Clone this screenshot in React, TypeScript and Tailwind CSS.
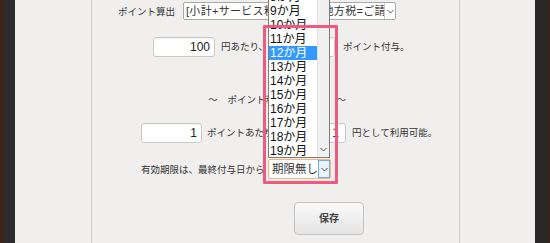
import React from 'react';

const months = [8, 9, 10, 11, 12, 13, 14, 15, 16, 17, 18, 19];

const Chevron = ({ className = '' }: { className?: string }) => (
  <svg width="7" height="5" viewBox="0 0 7 5" className={className}>
    <polyline points="0.5,1 3.5,4 6.5,1" fill="none" stroke="#555" strokeWidth="1" />
  </svg>
);

const NumInput = ({ value, width }: { value: string; width: string }) => (
  <div
    className={`${width} h-[20px] bg-white border border-[#c9c9c9] rounded-[3px] flex items-center justify-end pr-[4px] text-[12px] text-[#222] shadow-[inset_0_1px_1px_rgba(0,0,0,0.05)]`}
  >
    {value}
  </div>
);

export default function App() {
  return (
    <div className="w-[550px] h-[243px] flex overflow-hidden font-['Liberation_Sans','Noto_Sans_CJK_JP',sans-serif] text-[#333]">
      {/* left frame */}
      <div className="w-[15px] flex shrink-0">
        <div className="w-[4px] bg-[#3b2419]" />
        <div className="flex-1 bg-[#2d2b2b]" />
      </div>

      <div className="flex-1 flex bg-[#f0efed]">
        <div className="w-[77px] border-r border-[#cbcbcb]" />

        <div className="w-[367px] relative flex flex-col text-[9.5px] leading-[14px]">
          {/* ポイント算出 */}
          <div className="flex items-center mt-[2px] h-[18px]">
            <div className="ml-[26px] w-[65px] pt-[2px] whitespace-nowrap">ポイント算出</div>
            <div className="w-[213px] h-[18px] bg-white border border-[#a9a9a9] rounded-[2px] flex items-center">
              <span className="flex-1 pl-[2px] text-[11px] tracking-[0.3px] whitespace-nowrap overflow-hidden">
                [小計+サービス料+消費税+地方税=ご請求額]
              </span>
              <span className="w-[11px] h-[16px] border-l border-[#c9c9c9] flex items-center justify-center">
                <Chevron />
              </span>
            </div>
          </div>

          {/* 円あたり */}
          <div className="flex items-center mt-[17px]">
            <div className="ml-[61px]">
              <NumInput value="100" width="w-[62px]" />
            </div>
            <span className="ml-[6px] w-[54px] whitespace-nowrap">円あたり、</span>
            <NumInput value="1" width="w-[60px]" />
            <span className="ml-[8px] whitespace-nowrap">ポイント付与。</span>
          </div>

          {/* 見出し */}
          <div className="flex items-center mt-[36px] h-[14px]">
            <span className="ml-[116px]">～</span>
            <span className="ml-[10px] w-[109px] whitespace-nowrap">ポイント利用設定</span>
            <span>～</span>
          </div>

          {/* ポイントあたり */}
          <div className="flex items-center mt-[16px]">
            <div className="ml-[49px]">
              <NumInput value="1" width="w-[61px]" />
            </div>
            <span className="ml-[5px] w-[76px] whitespace-nowrap">ポイントあたり</span>
            <div className="[&>div]:pr-[6px]">
              <NumInput value="1" width="w-[63px]" />
            </div>
            <span className="ml-[6px] whitespace-nowrap">円として利用可能。</span>
          </div>

          {/* 有効期限 */}
          <div className="flex items-center mt-[16px]">
            <span className="ml-[49px] w-[127px] whitespace-nowrap pt-[2px]">有効期限は、最終付与日から</span>
            <div className="w-[63px] h-[20px] border border-[#f6b37c] rounded-[2px] bg-white flex items-center">
              <span className="flex-1 pl-[3px] text-[11.5px] whitespace-nowrap overflow-hidden">期限無し</span>
              <span className="w-[12px] h-[18px] border border-[#78a9de] bg-[#eaf2fb] flex items-center justify-center">
                <Chevron />
              </span>
            </div>
          </div>

          {/* 保存 */}
          <div className="mt-[23px] ml-[202px]">
            <button className="w-[70px] h-[33px] rounded-[4px] border border-[#c2c2c2] bg-gradient-to-b from-[#fafafa] to-[#e4e4e4] text-[10px] font-bold text-[#444]">
              保存
            </button>
          </div>

          {/* open dropdown list */}
          <div className="absolute left-[176px] top-[-10px] w-[62px] h-[168px] bg-white border border-[#7d7d7d] border-t-0 flex">
            <div className="flex-1 flex flex-col">
              {months.map((m) => (
                <div
                  key={m}
                  className={`h-[14px] leading-[14px] pl-[1px] text-[12px] whitespace-nowrap ${
                    m === 12 ? 'bg-[#3399ff] text-white' : 'text-[#111]'
                  }`}
                >
                  {m}か月
                </div>
              ))}
            </div>
            <div className="w-[12px] bg-[#f0f0f0] border-l border-[#e2e2e2] flex flex-col justify-end items-center pb-[5px]">
              <Chevron />
            </div>
          </div>

          {/* highlight annotation */}
          <div className="absolute left-[171px] top-[25px] w-[75px] h-[159px] border-[3px] border-[#f05a80] rounded-[1px]" />
        </div>

        <div className="flex-1 border-l border-[#cbcbcb]" />
      </div>

      {/* right frame */}
      <div className="w-[15px] flex shrink-0">
        <div className="flex-1 bg-[#2a2828]" />
        <div className="w-[2px] bg-[#3b2217]" />
      </div>
    </div>
  );
}
